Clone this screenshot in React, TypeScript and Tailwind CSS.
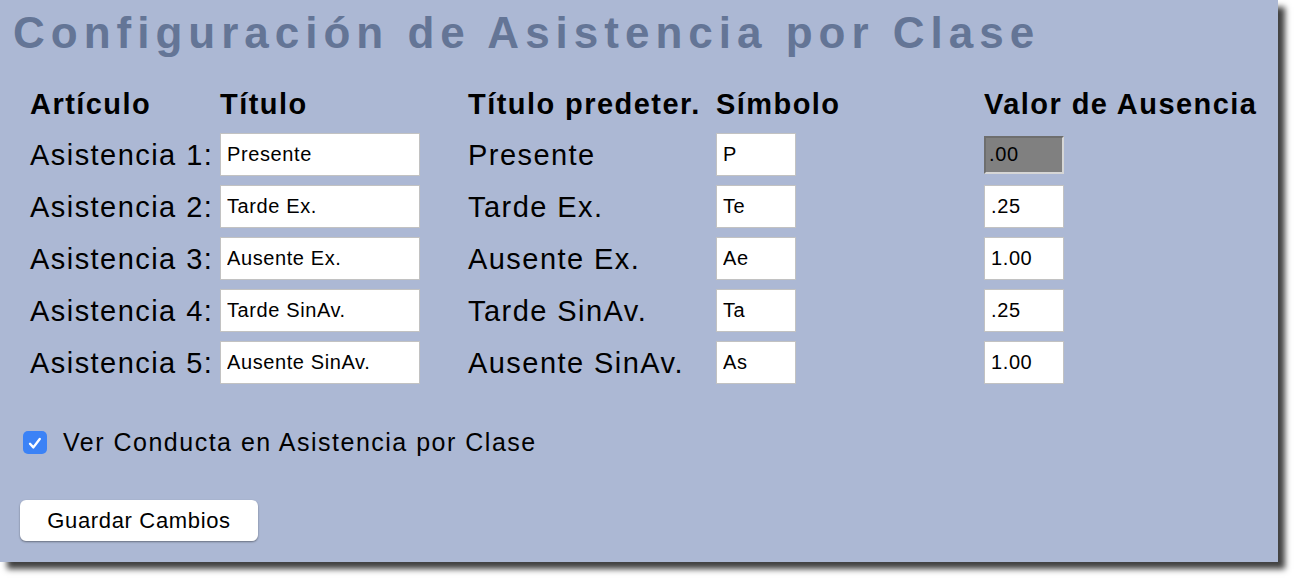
const rows = [
  { label: "Asistencia 1:", title: "Presente", symbol: "P", value: ".00", locked: true },
  { label: "Asistencia 2:", title: "Tarde Ex.", symbol: "Te", value: ".25" },
  { label: "Asistencia 3:", title: "Ausente Ex.", symbol: "Ae", value: "1.00" },
  { label: "Asistencia 4:", title: "Tarde SinAv.", symbol: "Ta", value: ".25" },
  { label: "Asistencia 5:", title: "Ausente SinAv.", symbol: "As", value: "1.00" },
];

const cols = "grid grid-cols-[190px_248px_248px_268px_1fr]";

const Field = ({ value, className }: { value: string; className: string }) => (
  <input
    readOnly
    value={value}
    className={`h-[43px] border border-[#c2c2c2] bg-white pl-[6px] text-[20px] tracking-[0.03em] text-black outline-none ${className}`}
  />
);

const App = () => {
  return (
    <div className="min-h-screen bg-white font-['Liberation_Sans',Arial,sans-serif]">
      <div className="w-[1278px] h-[562px] bg-[#acb8d4] shadow-[7px_7px_6px_rgba(0,0,0,0.75)]">
        <h1 className="pt-[11px] pl-[13px] text-[44px] leading-none font-bold tracking-[6px] text-[#647596]">
          Configuración de Asistencia por Clase
        </h1>

        <div className="pl-[30px] pt-[35px]">
          <div className={`${cols} text-[29px] leading-none font-bold tracking-[0.05em] text-black`}>
            <span>Artículo</span>
            <span>Título</span>
            <span>Título predeter.</span>
            <span>Símbolo</span>
            <span>Valor de Ausencia</span>
          </div>

          <div className={`${cols} mt-[14px] gap-y-[9px] items-center text-[29px] leading-none tracking-[0.05em] text-black`}>
            {rows.map((r) => (
              <div key={r.label} className="contents">
                <span className="pt-[2px]">{r.label}</span>
                <Field value={r.title} className="w-[200px]" />
                <span className="pt-[2px]">{r.title}</span>
                <Field value={r.symbol} className="w-[80px]" />
                {r.locked ? (
                  <input
                    readOnly
                    value={r.value}
                    className="h-[38px] w-[80px] border-2 border-t-[#6e6e6e] border-l-[#6e6e6e] border-r-[#d6d6d6] border-b-[#d6d6d6] bg-[#808080] pl-[3px] text-[20px] tracking-[0.03em] text-black outline-none"
                  />
                ) : (
                  <Field value={r.value} className="w-[80px]" />
                )}
              </div>
            ))}
          </div>
        </div>

        <label className="mt-[46px] ml-[23px] flex items-center gap-[16px]">
          <span className="flex h-[23px] w-[24px] items-center justify-center rounded-[5px] bg-[#3b82f6]">
            <svg width="20" height="20" viewBox="0 0 16 16" fill="none">
              <path d="M4 8.6 L6.7 11.5 L11.8 4.8" stroke="white" strokeWidth="1.9" strokeLinecap="round" strokeLinejoin="round" />
            </svg>
          </span>
          <span className="text-[25px] leading-none tracking-[0.06em] text-black">
            Ver Conducta en Asistencia por Clase
          </span>
        </label>

        <button className="mt-[45px] ml-[20px] h-[41px] w-[238px] rounded-[6px] bg-white text-[22px] tracking-[0.03em] text-black shadow-[0_1px_2px_rgba(0,0,0,0.4)]">
          Guardar Cambios
        </button>
      </div>
    </div>
  );
};

export default App;
